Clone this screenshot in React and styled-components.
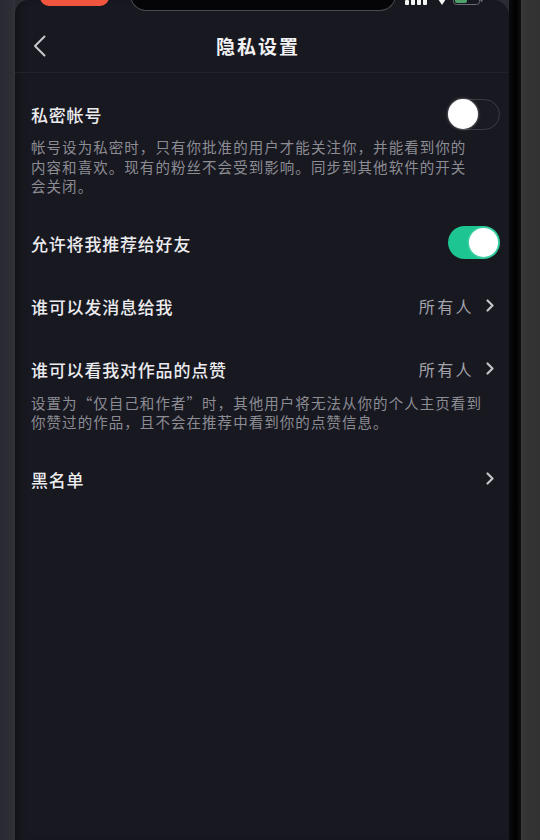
import React from "react";
import styled, { createGlobalStyle } from "styled-components";

const Global = createGlobalStyle`
  html, body { margin: 0; padding: 0; background: #2b2b34; }
  body { font-family: "Noto Sans CJK SC", "Noto Sans", sans-serif; }
  * { box-sizing: border-box; }
`;

const Page = styled.div`
  display: flex;
  width: 540px;
  height: 840px;
  overflow: hidden;
  background: #2b2b34;
`;

const LeftEdge = styled.div`
  width: 15px;
  flex: none;
  background: linear-gradient(90deg, #2a2a33 0%, #2e2e37 80%, #33333c 100%);
`;

const Screen = styled.div`
  width: 494px;
  flex: none;
  height: 840px;
  background: #181821;
  border-top-left-radius: 14px;
  border-top-right-radius: 16px;
  box-shadow: inset 8px 0 8px -6px rgba(0, 0, 0, 0.35);
  display: flex;
  flex-direction: column;
  overflow: hidden;
`;

const Bezel = styled.div`
  width: 12px;
  flex: none;
  background: linear-gradient(90deg, #0a0a0d 0%, #000 60%, #111 100%);
`;

const OuterEdge = styled.div`
  flex: 1;
  background: linear-gradient(90deg, #3a3a3a 0%, #333 30%, #323232 100%);
`;

const StatusBar = styled.div`
  position: relative;
  height: 20px;
  flex: none;
`;

const RecPill = styled.div`
  position: absolute;
  left: 25px;
  top: -12px;
  width: 69px;
  height: 18px;
  border-radius: 9px;
  background: #f2553d;
`;

const Notch = styled.div`
  position: absolute;
  left: 115px;
  top: -14px;
  width: 266px;
  height: 25px;
  border-radius: 0 0 16px 16px;
  background: #050507;
  border: 1.5px solid #4a4a50;
  border-top: none;
`;

const StatusIcons = styled.div`
  position: absolute;
  right: 26px;
  top: -4px;
  display: flex;
  align-items: flex-end;
  gap: 7px;
`;

const Header = styled.div`
  height: 53px;
  flex: none;
  display: flex;
  align-items: center;
  justify-content: center;
  position: relative;
  border-bottom: 1px solid #22222b;
`;

const BackButton = styled.div`
  position: absolute;
  left: 14px;
  top: 14px;
  width: 20px;
  height: 24px;
  display: flex;
  align-items: center;
  justify-content: center;
`;

const Title = styled.div`
  font-size: 19px;
  font-weight: 700;
  color: #f2f2f4;
  letter-spacing: 2px;
  margin-left: -8px;
  margin-top: -1px;
`;

const List = styled.div`
  display: flex;
  flex-direction: column;
  gap: 31px;
  padding: 25px 9px 0 16px;
`;

const Item = styled.div`
  display: flex;
  flex-direction: column;
`;

const ItemHead = styled.div`
  height: 32px;
  display: flex;
  align-items: center;
  justify-content: space-between;
`;

const Label = styled.div`
  font-size: 17px;
  font-weight: 500;
  color: #ececef;
  letter-spacing: 0.8px;
  margin-top: 1px;
`;

const Right = styled.div`
  display: flex;
  align-items: center;
  gap: 12px;
  padding-right: 6px;
`;

const Value = styled.div`
  font-size: 16px;
  color: #a3a3aa;
  letter-spacing: 2.4px;
`;

const Desc = styled.div`
  margin-top: ${(p) => p.$mt}px;
  font-size: 14.5px;
  line-height: 19.5px;
  color: #8c8c93;
  letter-spacing: 1.05px;
  white-space: nowrap;
`;

const Track = styled.div`
  width: 52px;
  height: ${(p) => (p.$on ? 33 : 31)}px;
  border-radius: 17px;
  display: flex;
  align-items: center;
  justify-content: ${(p) => (p.$on ? "flex-end" : "flex-start")};
  padding: 0 1px;
  background: ${(p) => (p.$on ? "#1cc592" : "#1a1a22")};
  border: ${(p) => (p.$on ? "none" : "1.5px solid #3b3b44")};
`;

const Knob = styled.div`
  width: ${(p) => (p.$on ? 29 : 30)}px;
  height: ${(p) => (p.$on ? 29 : 30)}px;
  border-radius: 50%;
  background: #ffffff;
  margin-left: ${(p) => (p.$on ? 0 : -2)}px;
  margin-right: ${(p) => (p.$on ? 1 : 0)}px;
  box-shadow: 0 0 3px rgba(255, 255, 255, 0.5);
`;

const Chevron = ({ size = 13, color = "#c2c2c7" }) => (
  <svg width={size * 0.62} height={size} viewBox="0 0 8 13" fill="none">
    <path d="M1.5 1.5 L6.5 6.5 L1.5 11.5" stroke={color} strokeWidth="2.2" strokeLinecap="round" strokeLinejoin="round" />
  </svg>
);

const Toggle = ({ on }) => (
  <Track $on={on}>
    <Knob $on={on} />
  </Track>
);

export default function App() {
  return (
    <>
      <Global />
      <Page>
        <LeftEdge />
        <Screen>
          <StatusBar>
            <RecPill />
            <Notch />
            <StatusIcons>
              <svg width="26" height="9" viewBox="0 0 26 9">
                <rect x="0" y="4" width="4" height="5" rx="1" fill="#f4f4f4" />
                <rect x="6" y="2" width="4" height="7" rx="1" fill="#f4f4f4" />
                <rect x="12" y="0" width="4" height="9" rx="1" fill="#f4f4f4" />
                <rect x="18" y="0" width="4" height="9" rx="1" fill="#f4f4f4" />
              </svg>
              <svg width="8" height="9" viewBox="0 0 8 9">
                <path d="M0 3 L4 9 L8 3 Z" fill="#f4f4f4" />
              </svg>
              <svg width="30" height="9" viewBox="0 0 30 9">
                <rect x="0.5" y="0" width="26" height="8.5" rx="3" fill="none" stroke="#6a6a78" strokeWidth="1" />
                <rect x="2" y="0" width="12" height="7" rx="2" fill="#4fa36a" />
                <rect x="27.5" y="2" width="2" height="4" rx="1" fill="#6a6a78" />
              </svg>
            </StatusIcons>
          </StatusBar>
          <Header>
            <BackButton>
              <svg width="13" height="22" viewBox="0 0 13 22" fill="none">
                <path d="M11.5 1.5 L2 11 L11.5 20.5" stroke="#c8c8cc" strokeWidth="2" strokeLinecap="round" strokeLinejoin="round" />
              </svg>
            </BackButton>
            <Title>隐私设置</Title>
          </Header>
          <List>
            <Item>
              <ItemHead>
                <Label>私密帐号</Label>
                <Toggle on={false} />
              </ItemHead>
              <Desc $mt={7}>
                帐号设为私密时，只有你批准的用户才能关注你，并能看到你的
                <br />
                内容和喜欢。现有的粉丝不会受到影响。同步到其他软件的开关
                <br />
                会关闭。
              </Desc>
            </Item>
            <Item>
              <ItemHead>
                <Label>允许将我推荐给好友</Label>
                <Toggle on />
              </ItemHead>
            </Item>
            <Item>
              <ItemHead>
                <Label>谁可以发消息给我</Label>
                <Right>
                  <Value>所有人</Value>
                  <Chevron />
                </Right>
              </ItemHead>
            </Item>
            <Item>
              <ItemHead>
                <Label>谁可以看我对作品的点赞</Label>
                <Right>
                  <Value>所有人</Value>
                  <Chevron />
                </Right>
              </ItemHead>
              <Desc $mt={8}>
                设置为“仅自己和作者”时，其他用户将无法从你的个人主页看到
                <br />
                你赞过的作品，且不会在推荐中看到你的点赞信息。
              </Desc>
            </Item>
            <Item>
              <ItemHead>
                <Label>黑名单</Label>
                <Right>
                  <Chevron />
                </Right>
              </ItemHead>
            </Item>
          </List>
        </Screen>
        <Bezel />
        <OuterEdge />
      </Page>
    </>
  );
}
